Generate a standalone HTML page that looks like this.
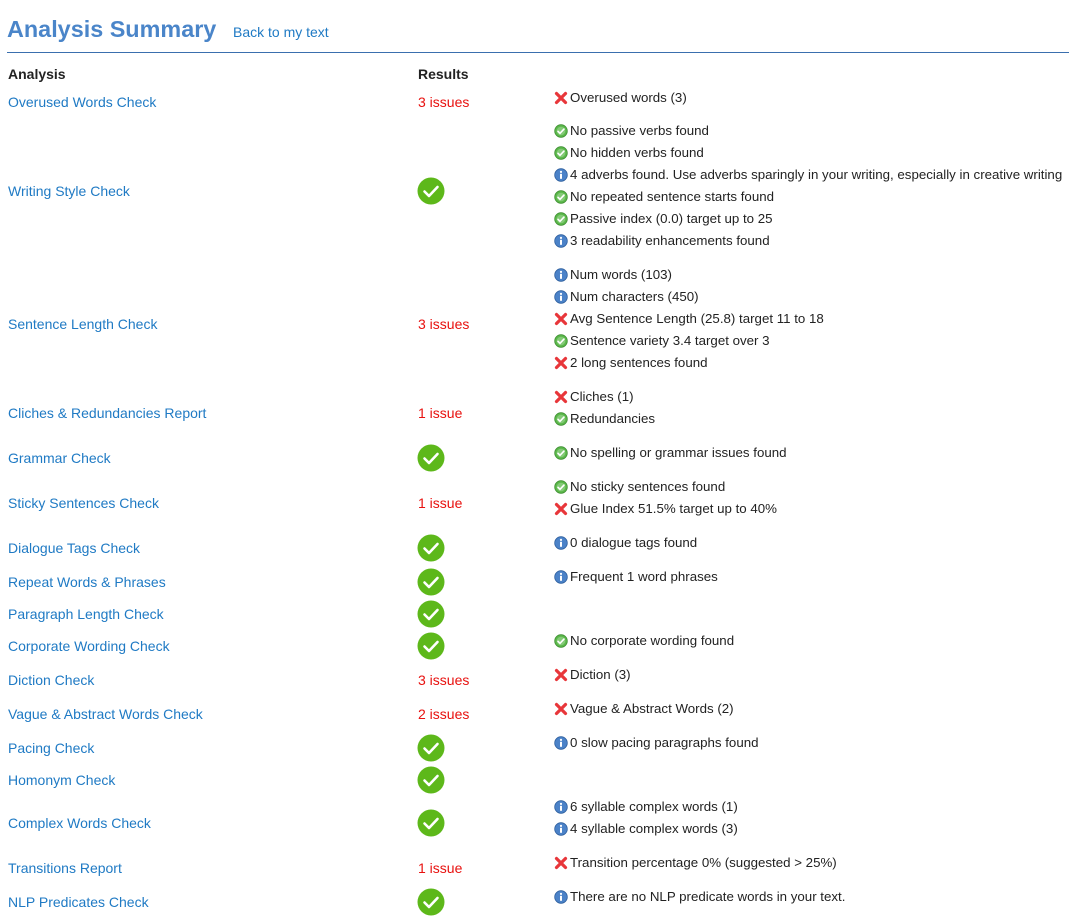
<!DOCTYPE html>
<html><head><meta charset="utf-8">
<style>
html,body{margin:0;padding:0;background:#fff;width:1069px;height:920px;overflow:hidden;font-family:"Liberation Sans",Arial,sans-serif;}
.t{position:absolute;font-size:14px;line-height:16px;white-space:nowrap;color:#222;}
.l{color:#1f7ac4;left:8px;}
.r{color:#e8110f;left:418px;}
.big{position:absolute;left:417px;width:28px;height:28px;}
.s{position:absolute;left:554px;width:14px;height:14px;}
.m{left:570px;font-size:13.3px;}
</style></head><body>
<svg width="0" height="0" style="position:absolute">
<defs>
<symbol id="B" viewBox="0 0 28 28"><circle cx="14" cy="14" r="13.5" fill="#5db81a"/><path d="M7.5 14.5l4.5 4.5 8.5-9" stroke="#fff" stroke-width="2.6" fill="none" stroke-linecap="round" stroke-linejoin="round"/></symbol>
<symbol id="G" viewBox="0 0 14 14"><circle cx="7" cy="7" r="6.3" fill="#5bb84a" stroke="#3f8f33" stroke-width="0.8"/><circle cx="7" cy="7" r="4.3" fill="#fff" opacity="0.25"/><path d="M4 7.3l2 2 4-4.2" stroke="#fff" stroke-width="1.6" fill="none" stroke-linecap="round"/></symbol>
<symbol id="I" viewBox="0 0 14 14"><circle cx="7" cy="7" r="6.3" fill="#4b82c8" stroke="#2e5f9e" stroke-width="0.8"/><circle cx="7" cy="3.9" r="1.1" fill="#fff"/><rect x="6" y="5.8" width="2" height="5" fill="#fff"/></symbol>
<symbol id="X" viewBox="0 0 14 14"><path d="M2.5 2.5l9 9M11.5 2.5l-9 9" stroke="#e8363a" stroke-width="3.2" stroke-linecap="round"/></symbol>
</defs></svg>

<div class="t" style="left:7px;top:14px;font-size:23.4px;line-height:30px;font-weight:bold;color:#4a85c9;">Analysis Summary</div>
<div class="t" style="left:233px;top:24px;color:#1f7ac4;">Back to my text</div>
<div style="position:absolute;left:7px;top:52px;width:1062px;height:1px;background:#3a6fae;"></div>
<div class="t" style="left:8px;top:66px;font-weight:bold;">Analysis</div>
<div class="t" style="left:418px;top:66px;font-weight:bold;">Results</div>

<div class="t l" style="top:94px">Overused Words Check</div>
<div class="t r" style="top:94px">3 issues</div>
<div class="t l" style="top:183px">Writing Style Check</div>
<svg class="big" style="top:177px"><use href="#B"/></svg>
<div class="t l" style="top:316px">Sentence Length Check</div>
<div class="t r" style="top:316px">3 issues</div>
<div class="t l" style="top:405px">Cliches &amp; Redundancies Report</div>
<div class="t r" style="top:405px">1 issue</div>
<div class="t l" style="top:450px">Grammar Check</div>
<svg class="big" style="top:444px"><use href="#B"/></svg>
<div class="t l" style="top:495px">Sticky Sentences Check</div>
<div class="t r" style="top:495px">1 issue</div>
<div class="t l" style="top:540px">Dialogue Tags Check</div>
<svg class="big" style="top:534px"><use href="#B"/></svg>
<div class="t l" style="top:574px">Repeat Words &amp; Phrases</div>
<svg class="big" style="top:568px"><use href="#B"/></svg>
<div class="t l" style="top:606px">Paragraph Length Check</div>
<svg class="big" style="top:600px"><use href="#B"/></svg>
<div class="t l" style="top:638px">Corporate Wording Check</div>
<svg class="big" style="top:632px"><use href="#B"/></svg>
<div class="t l" style="top:672px">Diction Check</div>
<div class="t r" style="top:672px">3 issues</div>
<div class="t l" style="top:706px">Vague &amp; Abstract Words Check</div>
<div class="t r" style="top:706px">2 issues</div>
<div class="t l" style="top:740px">Pacing Check</div>
<svg class="big" style="top:734px"><use href="#B"/></svg>
<div class="t l" style="top:772px">Homonym Check</div>
<svg class="big" style="top:766px"><use href="#B"/></svg>
<div class="t l" style="top:815px">Complex Words Check</div>
<svg class="big" style="top:809px"><use href="#B"/></svg>
<div class="t l" style="top:860px">Transitions Report</div>
<div class="t r" style="top:860px">1 issue</div>
<div class="t l" style="top:894px">NLP Predicates Check</div>
<svg class="big" style="top:888px"><use href="#B"/></svg>

<svg class="s" style="top:91px"><use href="#X"/></svg><div class="t m" style="top:90px">Overused words (3)</div>
<svg class="s" style="top:124px"><use href="#G"/></svg><div class="t m" style="top:123px">No passive verbs found</div>
<svg class="s" style="top:146px"><use href="#G"/></svg><div class="t m" style="top:145px">No hidden verbs found</div>
<svg class="s" style="top:168px"><use href="#I"/></svg><div class="t m" style="top:167px">4 adverbs found. Use adverbs sparingly in your writing, especially in creative writing</div>
<svg class="s" style="top:190px"><use href="#G"/></svg><div class="t m" style="top:189px">No repeated sentence starts found</div>
<svg class="s" style="top:212px"><use href="#G"/></svg><div class="t m" style="top:211px">Passive index (0.0) target up to 25</div>
<svg class="s" style="top:234px"><use href="#I"/></svg><div class="t m" style="top:233px">3 readability enhancements found</div>
<svg class="s" style="top:268px"><use href="#I"/></svg><div class="t m" style="top:267px">Num words (103)</div>
<svg class="s" style="top:290px"><use href="#I"/></svg><div class="t m" style="top:289px">Num characters (450)</div>
<svg class="s" style="top:312px"><use href="#X"/></svg><div class="t m" style="top:311px">Avg Sentence Length (25.8) target 11 to 18</div>
<svg class="s" style="top:334px"><use href="#G"/></svg><div class="t m" style="top:333px">Sentence variety 3.4 target over 3</div>
<svg class="s" style="top:356px"><use href="#X"/></svg><div class="t m" style="top:355px">2 long sentences found</div>
<svg class="s" style="top:390px"><use href="#X"/></svg><div class="t m" style="top:389px">Cliches (1)</div>
<svg class="s" style="top:412px"><use href="#G"/></svg><div class="t m" style="top:411px">Redundancies</div>
<svg class="s" style="top:446px"><use href="#G"/></svg><div class="t m" style="top:445px">No spelling or grammar issues found</div>
<svg class="s" style="top:480px"><use href="#G"/></svg><div class="t m" style="top:479px">No sticky sentences found</div>
<svg class="s" style="top:502px"><use href="#X"/></svg><div class="t m" style="top:501px">Glue Index 51.5% target up to 40%</div>
<svg class="s" style="top:536px"><use href="#I"/></svg><div class="t m" style="top:535px">0 dialogue tags found</div>
<svg class="s" style="top:570px"><use href="#I"/></svg><div class="t m" style="top:569px">Frequent 1 word phrases</div>
<svg class="s" style="top:634px"><use href="#G"/></svg><div class="t m" style="top:633px">No corporate wording found</div>
<svg class="s" style="top:668px"><use href="#X"/></svg><div class="t m" style="top:667px">Diction (3)</div>
<svg class="s" style="top:702px"><use href="#X"/></svg><div class="t m" style="top:701px">Vague &amp; Abstract Words (2)</div>
<svg class="s" style="top:736px"><use href="#I"/></svg><div class="t m" style="top:735px">0 slow pacing paragraphs found</div>
<svg class="s" style="top:800px"><use href="#I"/></svg><div class="t m" style="top:799px">6 syllable complex words (1)</div>
<svg class="s" style="top:822px"><use href="#I"/></svg><div class="t m" style="top:821px">4 syllable complex words (3)</div>
<svg class="s" style="top:856px"><use href="#X"/></svg><div class="t m" style="top:855px">Transition percentage 0% (suggested &gt; 25%)</div>
<svg class="s" style="top:890px"><use href="#I"/></svg><div class="t m" style="top:889px">There are no NLP predicate words in your text.</div>
</body></html>
